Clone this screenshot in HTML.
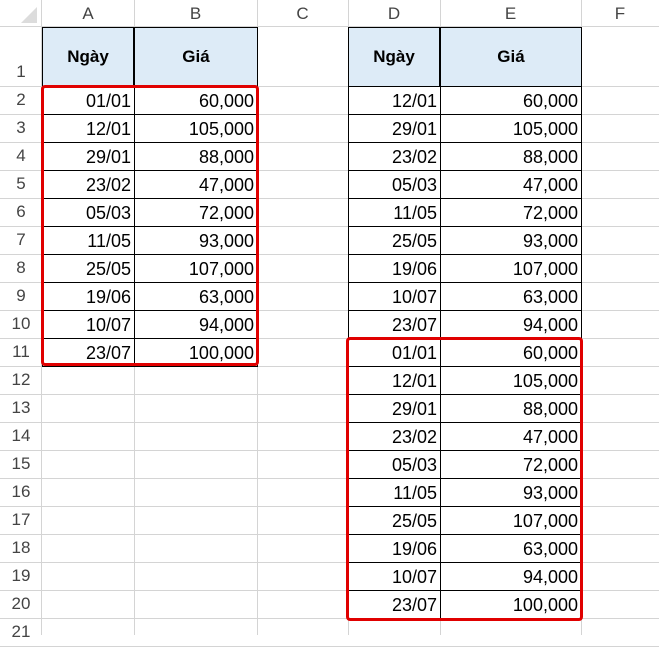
<!DOCTYPE html>
<html><head><meta charset="utf-8"><style>
body{margin:0;width:659px;height:635px;overflow:hidden;background:#fff;font-family:"Liberation Sans",sans-serif;position:relative}
.a{position:absolute;box-sizing:border-box}
.t{font-size:18px;color:#000;text-align:right;padding-right:3px;line-height:28px}
.h{font-size:17px;font-weight:bold;text-align:center;background:#DDEBF7}
.rn{font-size:17px;color:#444;text-align:center;line-height:28px}
.cl{font-size:17px;color:#444;text-align:center;line-height:27px}
</style></head><body>
<div id="g"></div>
<script>
var H='';
var cols=[0,42,134,257,348,440,581,659];
H+='<div class="a" style="left:0;top:0;width:659px;height:27px;background:#fff;border-bottom:1px solid #d4d4d4"></div>';
H+='<div class="a" style="left:0;top:0;width:42px;height:635px;border-right:1px solid #d4d4d4"></div>';
H+='<svg class="a" style="left:20px;top:6px" width="18" height="18"><polygon points="17,1 17,17 1,17" fill="#dcdcdc"/></svg>';
var L=['A','B','C','D','E','F'];
for(var i=0;i<6;i++){H+='<div class="a cl" style="left:'+cols[i+1]+'px;top:0;width:'+(cols[i+2]-cols[i+1])+'px;height:27px">'+L[i]+'</div>';
H+='<div class="a" style="left:'+cols[i+2]+'px;top:0;width:1px;height:635px;background:#d4d4d4"></div>';}
function ry(r){return r==1?27:86+(r-2)*28}
for(var r=1;r<=21;r++){var y=ry(r),h=r==1?59:28;
H+='<div class="a" style="left:0;top:'+(y+h)+'px;width:659px;height:1px;background:#d4d4d4"></div>';
H+='<div class="a rn" style="left:0;top:'+(r==1?y+31:y)+'px;width:42px;height:28px">'+r+'</div>';}
function tbl(x0,x1,x2,dates,vals,n){
 H+='<div class="a h" style="left:'+x0+'px;top:27px;width:'+(x1-x0)+'px;height:60px;line-height:58px;border:1px solid #000">Ngày</div>';
 H+='<div class="a h" style="left:'+x1+'px;top:27px;width:'+(x2-x1+1)+'px;height:60px;line-height:58px;border:1px solid #000">Giá</div>';
 for(var i=0;i<n;i++){var y=86+i*28;
  H+='<div class="a t" style="left:'+x0+'px;top:'+y+'px;width:'+(x1-x0+1)+'px;height:29px;border:1px solid #000;background:#fff">'+dates[i]+'</div>';
  H+='<div class="a t" style="left:'+x1+'px;top:'+y+'px;width:'+(x2-x1+1)+'px;height:29px;border:1px solid #000;background:#fff">'+vals[i]+'</div>';}
}
var d1=['01/01','12/01','29/01','23/02','05/03','11/05','25/05','19/06','10/07','23/07'];
var v1=['60,000','105,000','88,000','47,000','72,000','93,000','107,000','63,000','94,000','100,000'];
var d2=['12/01','29/01','23/02','05/03','11/05','25/05','19/06','10/07','23/07'];
tbl(42,134,257,d1,v1,10);
tbl(348,440,581,d2.concat(d1),v1.slice(0,9).concat(v1),19);
H+='<div class="a" style="left:41px;top:85px;width:218px;height:281px;border:3px solid #e00000;border-radius:4px"></div>';
H+='<div class="a" style="left:346px;top:337px;width:237px;height:284px;border:3px solid #e00000;border-radius:4px"></div>';
document.getElementById('g').innerHTML=H;
</script>
</body></html>
